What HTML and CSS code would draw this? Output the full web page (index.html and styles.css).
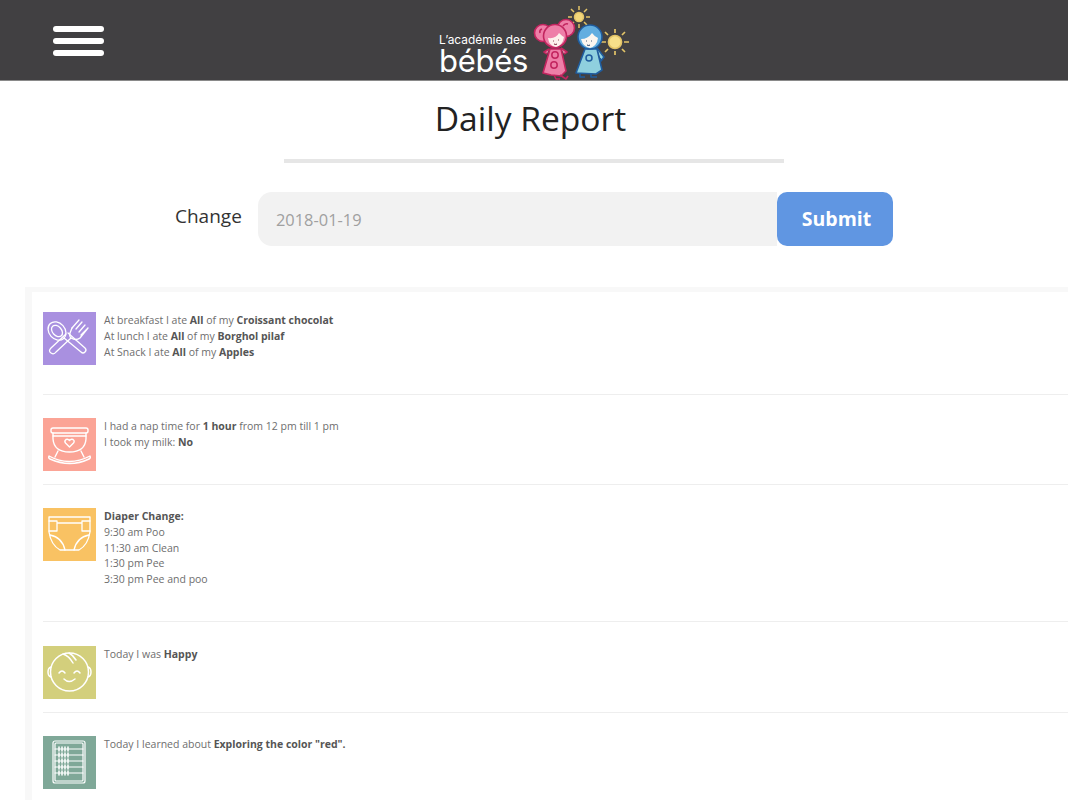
FILE: index.html
```html
<!DOCTYPE html>
<html lang="en">
<head>
    <meta charset="UTF-8">
    <meta name="viewport" content="width=device-width, initial-scale=1.0">
    <title>Daily Report</title>
    <link rel="stylesheet" href="styles.css">
</head>
<body>
    <header class="topbar">
        <div class="burger"><span></span><span></span><span></span></div>
        <div class="logo">
            <div class="logo-text">
                <div class="logo-small">L’académie des</div>
                <div class="logo-big">bébés</div>
            </div>
            <svg class="logo-art" width="100" height="75" viewBox="0 0 100 75">
                <!-- top sun -->
                <g stroke="#e3c468" stroke-width="1.5" fill="#f3d77a">
                    <circle cx="49" cy="12" r="4.500"/>
                    <path d="M49 5V1M49 23v-4M42 12h-4M60 12h-4M44 7l-3-3M57 20l-3-3M44 17l-3 3M57 4l-3 3" fill="none"/>
                </g>
                <!-- right sun -->
                <g stroke="#e3c468" stroke-width="1.700" fill="#f7e08a">
                    <circle cx="85" cy="37" r="6.500"/>
                    <path d="M85 28v-4M85 50v-4M76 37h-5M99 37h-5M78 30l-3-3M95 47l-3-3M78 44l-3 3M95 27l-3 3" fill="none"/>
                </g>
                <!-- girl -->
                <g stroke="#c2255f" stroke-width="1.600" fill="#ee7fa8" stroke-linejoin="round">
                    <path d="M19 44l-5 3 3 2M31 43l6 4-3 2"/>
                    <path d="M20 44h11l5 22-5 5-10-1-8-2z"/>
                    <path d="M24 70l2 4 4 0M30 70l6 4 2-3" fill="none"/>
                    <circle cx="13" cy="28" r="8.500"/>
                    <circle cx="36" cy="23" r="8.500"/>
                    <path d="M10 28q-1-3 2-4M33 21q2-3 5-2" fill="none"/>
                    <circle cx="25" cy="31" r="11.500"/>
                </g>
                <path d="M18 33q8 1 11-5q3 3 5 4q-1 8-8 10q-7-1-8-9z" fill="#fdf1ec"/>
                <path d="M23 36h.8M28 35h.8M24 39q2 1 3 0" fill="none" stroke="#7a2338" stroke-width="1"/>
                <circle cx="25" cy="50" r="3.200" fill="none" stroke="#c2255f" stroke-width="1.500"/>
                <circle cx="24" cy="60" r="3.200" fill="none" stroke="#c2255f" stroke-width="1.500"/>
                <!-- boy -->
                <g stroke="#1f5c9e" stroke-width="1.600" fill="#8fd0de" stroke-linejoin="round">
                    <path d="M67 43l7 9-3 4-1-3"/>
                    <path d="M55 44h12l5 21-6 4-20-1z"/>
                    <path d="M50 68v4h5M61 69v3h6" fill="none"/>
                </g>
                <circle cx="60" cy="32" r="12" fill="#62aee0" stroke="#1f5c9e" stroke-width="1.600"/>
                <path d="M51 34q7 0 11-6q3 4 6 5q-1 8-8 10q-7-1-9-9z" fill="#fbf6f0"/>
                <path d="M56 36h.8M61 36h.8M57 40q2 1 3 0" fill="none" stroke="#1f3a5f" stroke-width="1"/>
                <circle cx="59" cy="53" r="3" fill="none" stroke="#1f5c9e" stroke-width="1.500"/>
            </svg>
        </div>
    </header>

    <main>
        <h1 class="title">Daily Report</h1>
        <div class="rule"></div>

        <form class="date-form" onsubmit="event.preventDefault();">
            <label class="date-label" for="date">Change</label>
            <input class="date-input" id="date" type="text" value="2018-01-19">
            <button class="date-submit" type="submit">Submit</button>
        </form>

        <section class="report">
            <div class="entry entry-food">
                <div class="icon icon-food">
                    <svg viewBox="0 0 53 53" fill="none" stroke="#fff" stroke-width="1.300" stroke-linecap="round" stroke-linejoin="round">
                        <ellipse cx="14" cy="19" rx="8" ry="10" transform="rotate(-42 14 19)"/>
                        <ellipse cx="14" cy="19" rx="4.500" ry="6.500" transform="rotate(-42 14 19)"/>
                        <path d="M21 26l17 14q2 2 4 0t0-4L25 21"/>
                        <path d="M29 16l-2 5q-1 3 1 5L13 40q-2 3-5 1t0-5l15-14"/>
                        <path d="M36 8l-7 8M39 10l-6 7M42 13l-6 7M45 16l-7 7M28 26q5 3 9 0l8-10"/>
                    </svg>
                </div>
                <div class="text">
                    <p>At breakfast I ate <b>All</b> of my <b>Croissant chocolat</b></p>
                    <p>At lunch I ate <b>All</b> of my <b>Borghol pilaf</b></p>
                    <p>At Snack I ate <b>All</b> of my <b>Apples</b></p>
                </div>
            </div>

            <div class="entry entry-nap">
                <div class="icon icon-nap">
                    <svg viewBox="0 0 53 53" fill="none" stroke="#fff" stroke-width="1.400" stroke-linecap="round" stroke-linejoin="round">
                        <rect x="8" y="10" width="37" height="5" rx="2"/>
                        <path d="M10 15v6q1 13 16.500 13T43 21v-6"/>
                        <path d="M10 18h33"/>
                        <path d="M26.500 29l-4-4q-1.500-2 .5-3.500 2-1 3.500 1 1.500-2 3.500-1 2 1.500 .5 3.500z"/>
                        <path d="M6 38q20 11 41 0q1 2-1 3q-19 9-39 0q-2-1-1-3z"/>
                        <path d="M15 33l-3 6M38 33l3 6"/>
                    </svg>
                </div>
                <div class="text">
                    <p>I had a nap time for <b>1 hour</b> from 12 pm till 1 pm</p>
                    <p>I took my milk: <b>No</b></p>
                </div>
            </div>

            <div class="entry entry-diaper">
                <div class="icon icon-diaper">
                    <svg viewBox="0 0 53 53" fill="none" stroke="#fff" stroke-width="1.300" stroke-linecap="round" stroke-linejoin="round">
                        <path d="M6 9h41v15q-2 13-11 18H17Q8 37 6 24z"/>
                        <path d="M6 13h8v10H6M47 13h-8v10h8M14 15h25"/>
                        <path d="M7 27q12 2 15 15M46 27q-12 2-15 15"/>
                    </svg>
                </div>
                <div class="text">
                    <p><b>Diaper Change:</b></p>
                    <p>9:30 am Poo</p>
                    <p>11:30 am Clean</p>
                    <p>1:30 pm Pee</p>
                    <p>3:30 pm Pee and poo</p>
                </div>
            </div>

            <div class="entry entry-mood">
                <div class="icon icon-mood">
                    <svg viewBox="0 0 53 53" fill="none" stroke="#fff" stroke-width="1.500" stroke-linecap="round" stroke-linejoin="round">
                        <circle cx="26.500" cy="26" r="19"/>
                        <path d="M8 21q-3 1-3 5t3 5M45 21q3 1 3 5t-3 5"/>
                        <path d="M20 8q6 2 10 9M26 7q4 2 7 7"/>
                        <path d="M16 27q3-4 6 0M31 27q3-4 6 0M21 33q5 5 11 0"/>
                    </svg>
                </div>
                <div class="text">
                    <p>Today I was <b>Happy</b></p>
                </div>
            </div>

            <div class="entry entry-learn">
                <div class="icon icon-learn">
                    <svg viewBox="0 0 53 53" fill="none" stroke="#fff" stroke-width="1.200" stroke-linecap="round" stroke-linejoin="round">
                        <rect x="10" y="5" width="32" height="42" rx="2"/>
                        <rect x="12" y="7" width="28" height="38" rx="1"/>
                        <path d="M12 13h28M12 19h28M12 25h28M12 31h28M12 37h28"/>
                        <path d="M16 11v4M19 11v4M22 11v4M25 11v4M16 17v4M19 17v4M22 17v4M25 17v4M16 23v4M19 23v4M22 23v4M25 23v4M16 29v4M19 29v4M22 29v4M25 29v4M16 35v4M19 35v4M22 35v4M25 35v4" stroke-width="1.500"/>
                    </svg>
                </div>
                <div class="text">
                    <p>Today I learned about <b>Exploring the color "red".</b></p>
                </div>
            </div>
        </section>
    </main>
</body>
</html>
```

FILE: styles.css
```css
html, body {
    margin: 0;
    padding: 0;
    height: 800px;
    overflow: hidden;
}

body {
    font-family: "Open Sans", sans-serif;
    background-color: white;
}

.topbar {
    height: 81px;
    box-sizing: border-box;
    background-color: #414042;
    border-bottom: 1px solid #8a8a8a;
    display: flex;
    align-items: center;
    justify-content: center;
    position: relative;
}

.burger {
    position: absolute;
    left: 53px;
    top: 26px;
    width: 51px;
    display: flex;
    flex-direction: column;
    gap: 6px;
}

.burger span {
    display: block;
    height: 6px;
    background-color: white;
    border-radius: 4px;
}

.logo {
    display: flex;
    align-items: flex-end;
    margin-left: 1px;
    height: 80px;
}

.logo-text {
    color: white;
    font-family: "Inter", sans-serif;
    margin-bottom: 4px;
    width: 91px;
}

.logo-small {
    font-size: 11.900px;
    line-height: 14px;
    white-space: nowrap;
}

.logo-big {
    font-size: 31px;
    line-height: 31px;
    letter-spacing: -0.3px;
    margin-top: -2px;
}

.logo-art {
    display: block;
}

.title {
    margin: 0;
    padding: 14px 7px 0 0;
    font-size: 33.600px;
    line-height: 46px;
    font-weight: 400;
    text-align: center;
    color: #222;
}

.rule {
    width: 500px;
    height: 4px;
    margin: 18px auto 0;
    background-color: #e6e6e6;
}

.date-form {
    display: flex;
    align-items: center;
    width: 718px;
    height: 54px;
    margin: 29px 0 0 175px;
}

.date-label {
    width: 83px;
    padding-bottom: 6px;
    font-size: 19px;
    color: #333;
}

.date-input {
    width: 519px;
    height: 54px;
    box-sizing: border-box;
    padding: 0 18px;
    font-family: inherit;
    font-size: 16.400px;
    color: #a0a0a0;
    background-color: #f2f2f2;
    border: none;
    border-radius: 14px 0 0 14px;
}

.date-submit {
    width: 116px;
    height: 54px;
    padding: 0 0 2px 3px;
    font-family: inherit;
    font-size: 19.500px;
    font-weight: 700;
    color: white;
    background-color: #6096e2;
    border: none;
    border-radius: 10px;
}

.report {
    margin: 41px 0 0 25px;
    border-top: 5px solid #f8f8f8;
    border-left: 7px solid #f8f8f8;
    padding-left: 11px;
    height: 520px;
    overflow: hidden;
}

.entry {
    display: flex;
    gap: 8px;
    border-bottom: 1px solid #eeeeee;
    box-sizing: border-box;
}

.entry-food { height: 103px; padding-top: 20px; }
.entry-nap { height: 90px; padding-top: 23px; }
.entry-diaper { height: 137px; padding-top: 23px; }
.entry-mood { height: 91px; padding-top: 24px; }
.entry-learn { border-bottom: none; padding-top: 23px; }

.icon {
    flex: none;
    width: 53px;
    height: 53px;
}

.icon svg {
    display: block;
    width: 53px;
    height: 53px;
}

.icon-food { background-color: #a990e0; }
.icon-nap { background-color: #fba496; }
.icon-diaper { background-color: #f9c263; }
.icon-mood { background-color: #d3cf7c; }
.icon-learn { background-color: #7fa898; }

.text {
    padding-top: 1px;
    font-size: 10.500px;
    line-height: 15.800px;
    color: #6e6e6e;
}

.text p {
    margin: 0;
}

.text b {
    color: #555;
}
```
